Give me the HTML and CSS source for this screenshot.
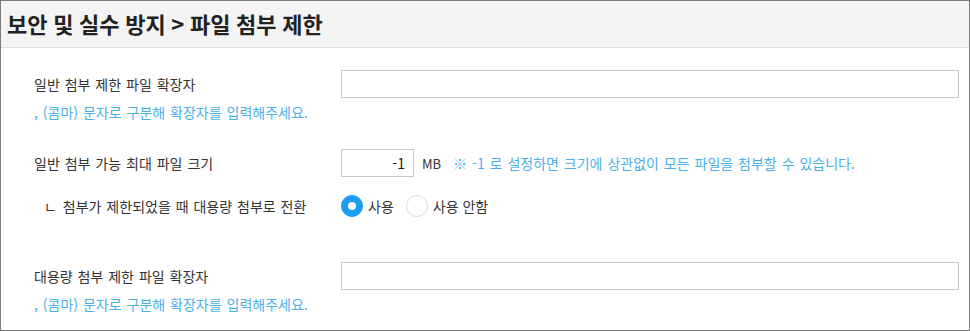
FILE: index.html
```html
<!DOCTYPE html>
<html lang="ko">
<head>
<meta charset="utf-8">
<title>파일 첨부 제한</title>
<link rel="stylesheet" href="styles.css">
</head>
<body>
<div class="panel">
  <div class="header"><h1 class="title">보안 및 실수 방지 &gt; 파일 첨부 제한</h1></div>
  <div class="form">
    <div class="row row-first">
      <div class="label">일반 첨부 제한 파일 확장자</div>
      <div class="field"><input class="text-input wide" type="text"></div>
    </div>
    <div class="hint">, (콤마) 문자로 구분해 확장자를 입력해주세요.</div>

    <div class="row row-size">
      <div class="label">일반 첨부 가능 최대 파일 크기</div>
      <div class="field">
        <input class="text-input small" type="text" value="-1">
        <span class="unit">MB</span>
        <span class="note">※ -1 로 설정하면 크기에 상관없이 모든 파일을 첨부할 수 있습니다.</span>
      </div>
    </div>

    <div class="row row-switch">
      <div class="label sub"><span class="corner">ㄴ</span> 첨부가 제한되었을 때 대용량 첨부로 전환</div>
      <div class="field">
        <label class="radio"><span class="dot checked"></span><span class="radio-text">사용</span></label>
        <label class="radio"><span class="dot"></span><span class="radio-text">사용 안함</span></label>
      </div>
    </div>

    <div class="row row-large">
      <div class="label">대용량 첨부 제한 파일 확장자</div>
      <div class="field"><input class="text-input wide" type="text"></div>
    </div>
    <div class="hint">, (콤마) 문자로 구분해 확장자를 입력해주세요.</div>
  </div>
</div>
</body>
</html>
```
FILE: styles.css
```css
* { box-sizing: border-box; }
html, body { margin: 0; padding: 0; background: #fff; }
body {
  font-family: "Noto Sans CJK KR", "Noto Sans", sans-serif;
  color: #333;
  font-size: 14px;
}
.panel {
  width: 970px;
  height: 331px;
  border: 1px solid #7b7b7b;
  overflow: hidden;
}
.header {
  height: 47px;
  background: #f4f4f4;
  border-bottom: 1px solid #dcdcdc;
  display: flex;
  align-items: center;
  padding-left: 6px;
}
.title {
  margin: 0;
  font-size: 22px;
  font-weight: bold;
  color: #222;
  line-height: 28px;
  margin-top: -2px;
  word-spacing: -0.5px;
}
.form {
  padding-left: 33px;
  padding-right: 10px;
}
.row {
  display: flex;
  align-items: center;
  height: 28px;
}
.row-first { margin-top: 22px; }
.row-size { margin-top: 28px; }
.row-switch { margin-top: 15px; }
.row-large { margin-top: 42px; }
.label {
  width: 307px;
  flex: none;
  line-height: 18px;
  color: #333;
  word-spacing: 1px;
}
.label.sub { padding-left: 10px; }
.corner { margin-right: 1px; }
.field {
  flex: 1;
  display: flex;
  align-items: center;
}
.text-input {
  height: 28px;
  border: 1px solid #c8c8c8;
  background: #fff;
  font-family: inherit;
  font-size: 14px;
  color: #222;
  outline: none;
  padding: 0 8px;
}
.text-input.wide { width: 618px; }
.text-input.small { width: 73px; text-align: right; }
.unit { margin-left: 8px; color: #333; font-size: 13px; }
.note {
  margin-left: 12px;
  color: #4cb0e8;
  word-spacing: 1px;
}
.hint {
  margin-top: 5px;
  line-height: 18px;
  color: #4cb0e8;
  word-spacing: 1px;
}
.radio {
  display: flex;
  align-items: center;
  margin-right: 12px;
}
.dot {
  width: 22px;
  height: 22px;
  border-radius: 50%;
  border: 1px solid #dadada;
  background: #fff;
  display: flex;
  align-items: center;
  justify-content: center;
}
.dot.checked {
  background: #1a9df0;
  border-color: #1a9df0;
}
.dot.checked::after {
  content: "";
  width: 8px;
  height: 8px;
  border-radius: 50%;
  background: #fff;
}
.radio-text { margin-left: 5px; color: #333; }
```
